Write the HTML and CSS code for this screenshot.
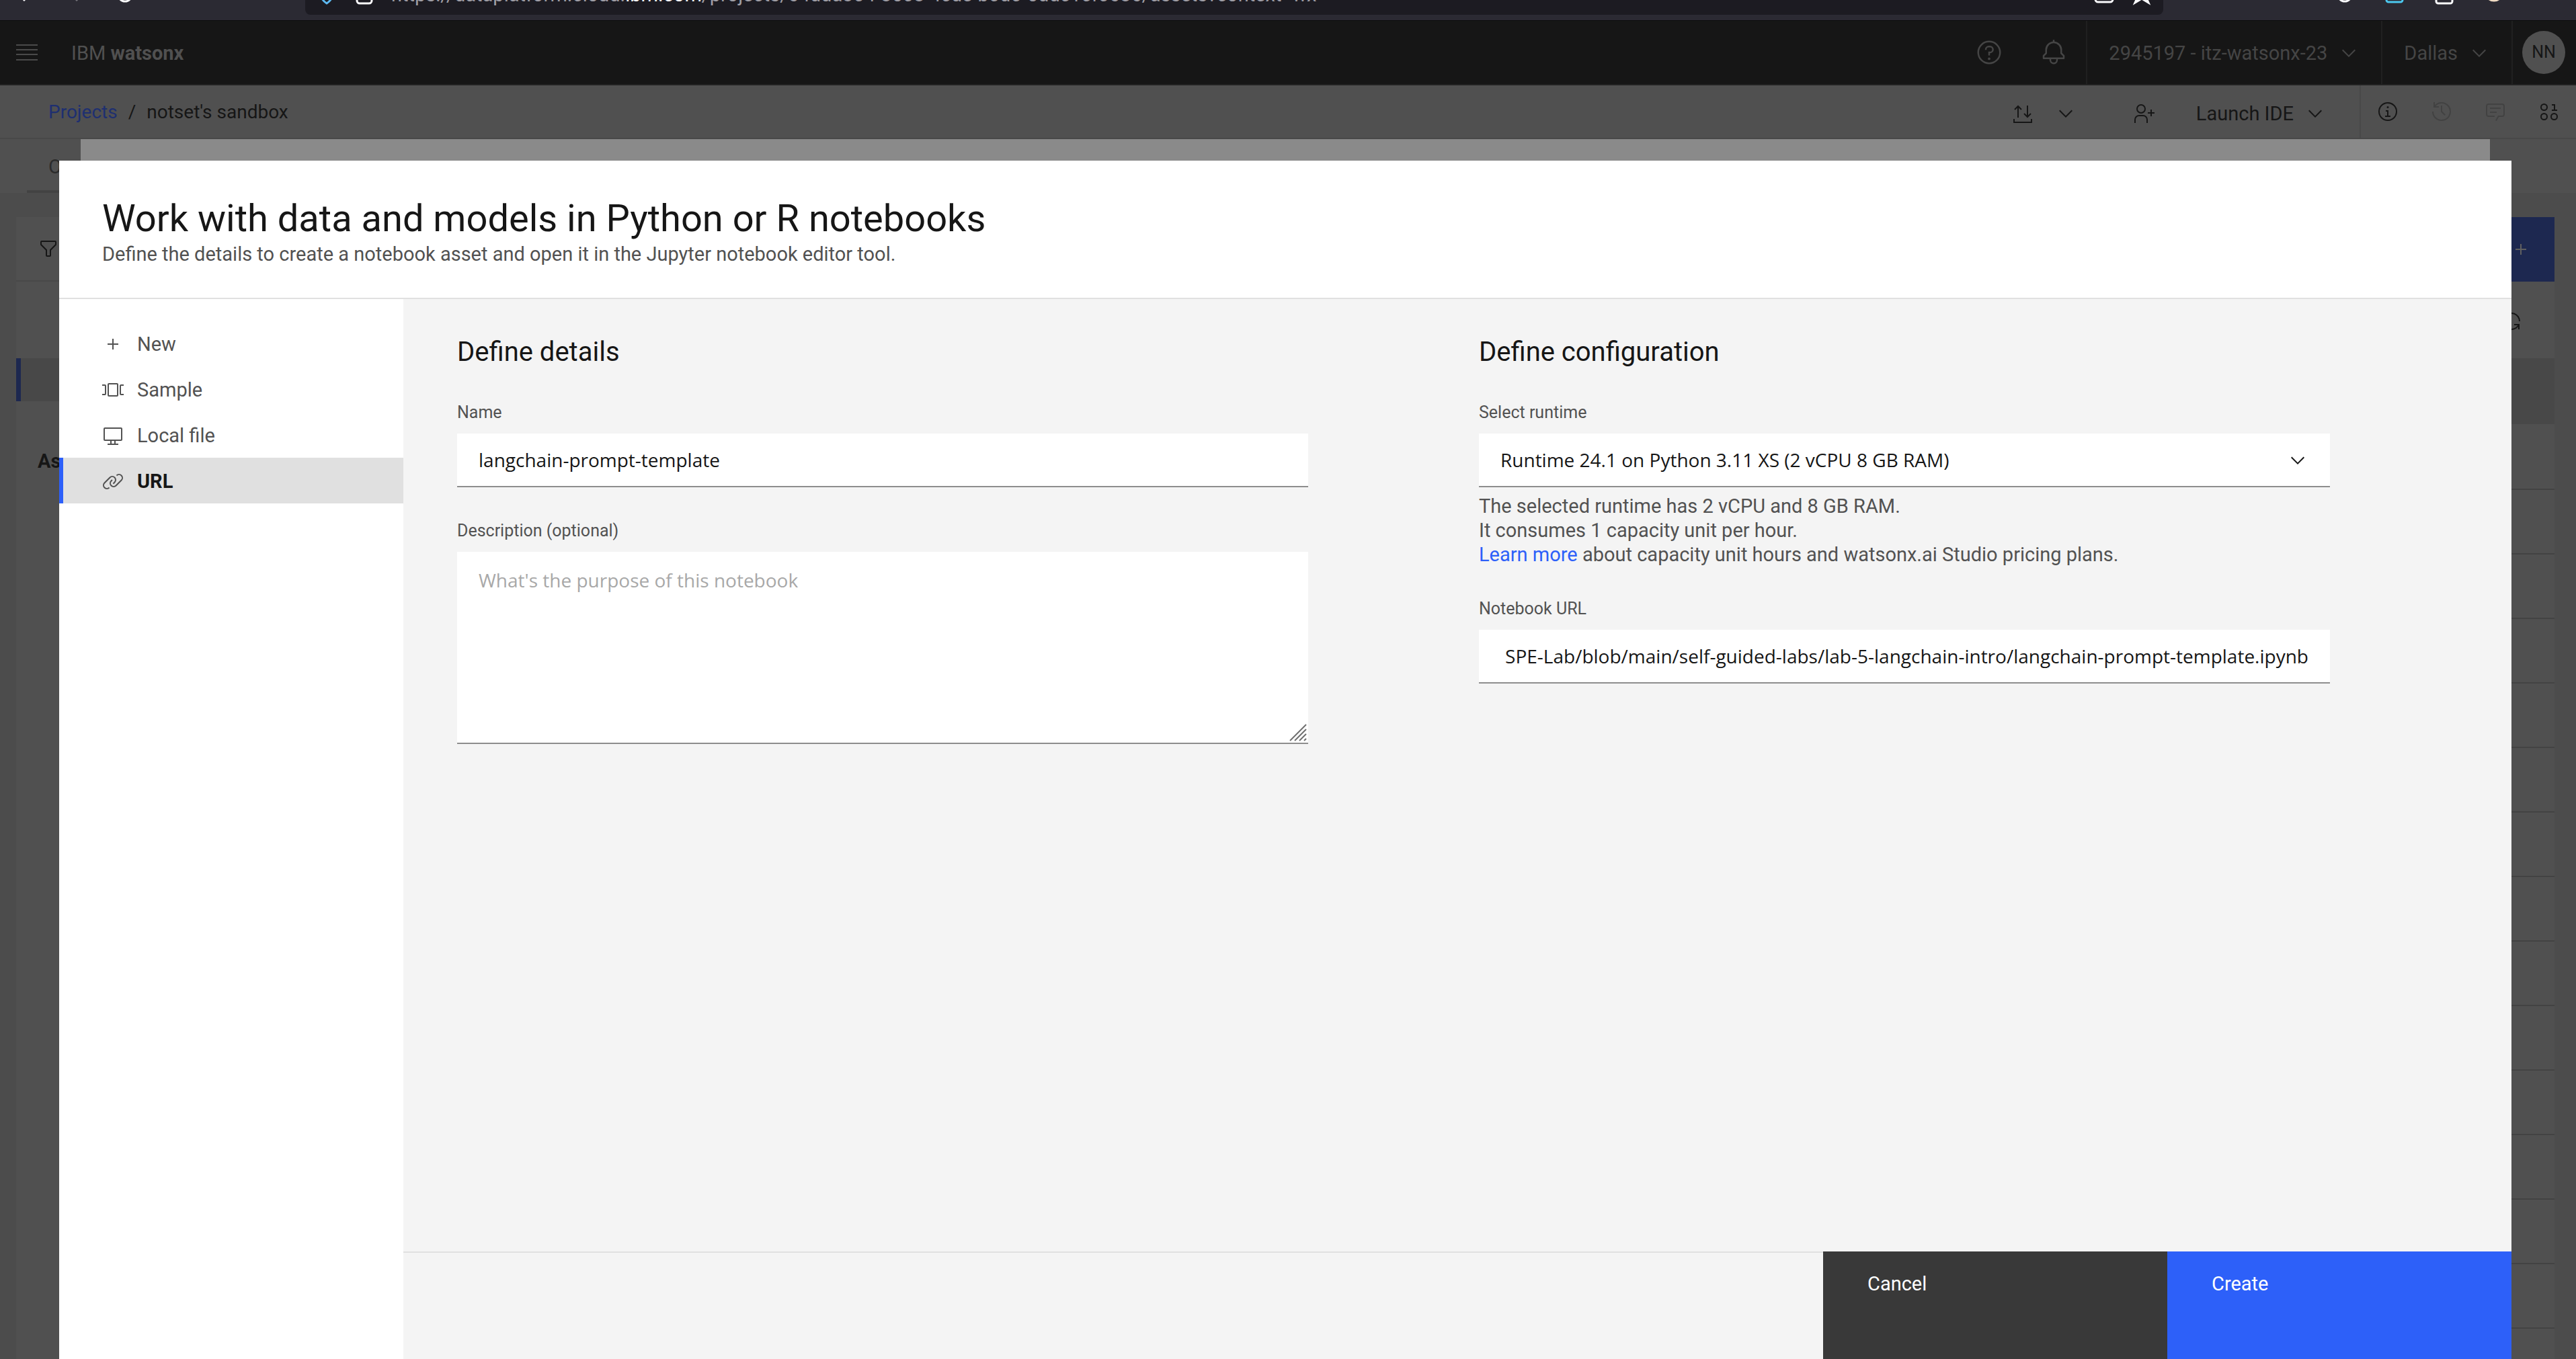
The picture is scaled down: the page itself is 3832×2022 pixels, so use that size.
FILE: index.html
```html
<!DOCTYPE html>
<html lang="en">
<head>
<meta charset="utf-8">
<meta name="viewport" content="width=device-width, initial-scale=1">
<title>New notebook - IBM watsonx</title>
<link rel="stylesheet" href="styles.css">
</head>
<body>
<svg class="defs" aria-hidden="true">
  <symbol id="chevron" viewBox="0 0 32 32"><path d="M16 22 6 12 7.4 10.6 16 19.2 24.6 10.6 26 12z"/></symbol>
  <symbol id="add" viewBox="0 0 32 32"><path d="M17 15V8h-2v7H8v2h7v7h2v-7h7v-2z"/></symbol>
</svg>

<div class="browser">
  <div class="browser-nav">
    <svg class="bi" viewBox="0 0 32 32"><path d="M26 16H6M15 7l-9 9 9 9"/></svg>
    <svg class="bi bi-muted" viewBox="0 0 32 32"><path d="M6 16h20M17 7l9 9-9 9"/></svg>
    <svg class="bi" viewBox="0 0 32 32"><circle cx="16" cy="16" r="10"/></svg>
  </div>
  <div class="url-bar">
    <svg class="bi bi-blue" viewBox="0 0 32 32"><path d="M16 4 6 7c0 10 2 17 10 22 8-5 10-12 10-22z"/></svg>
    <svg class="bi" viewBox="0 0 32 32"><rect x="5" y="13" width="22" height="16" rx="4"/><path d="M10 13V8a6 6 0 0 1 12 0v5"/></svg>
    <span class="url">https://dataplatform.cloud.<b>ibm.com</b>/projects/64dda304-8508-4cde-b0d0-5ddc1cf0686/assets?context=wx</span>
    <svg class="bi" viewBox="0 0 32 32"><rect x="3" y="5" width="26" height="22" rx="4"/></svg>
    <svg class="bi" viewBox="0 0 32 32"><path d="m16 3 4 9 9 1-7 6 4 9-10-6-10 6 4-9-7-6 9-1z"/></svg>
  </div>
  <div class="browser-ext">
    <svg class="bi" viewBox="0 0 32 32"><circle cx="16" cy="16" r="10"/></svg>
    <svg class="bi bi-cyan" viewBox="0 0 32 32"><rect x="4" y="5" width="24" height="22" rx="3"/></svg>
    <svg class="bi" viewBox="0 0 32 32"><rect x="4" y="5" width="24" height="24" rx="3"/></svg>
    <svg class="bi bi-orange" viewBox="0 0 32 32"><circle cx="16" cy="12" r="13"/></svg>
  </div>
</div>

<div class="app">
  <header class="header">
    <button class="icon-btn menu" aria-label="Menu">
      <svg width="32" height="24" viewBox="0 0 32 24"><path d="M0 0h32v2H0zM0 7h32v2H0zM0 14h32v2H0zM0 22h32v2H0z"/></svg>
    </button>
    <span class="brand">IBM <b>watsonx</b></span>
    <button class="icon-btn header-icon" aria-label="Help">
      <svg width="40" height="40" viewBox="0 0 32 32"><path d="M16 2a14 14 0 1 0 14 14A14 14 0 0 0 16 2zm0 26a12 12 0 1 1 12-12 12 12 0 0 1-12 12z"/><circle cx="16" cy="23.5" r="1.5"/><path d="M17 8h-1.500A4.490 4.490 0 0 0 11 12.500V13h2v-.5A2.500 2.500 0 0 1 15.500 10H17a2.500 2.500 0 0 1 0 5h-2v4.500h2V17a4.500 4.500 0 0 0 0-9z"/></svg>
    </button>
    <button class="icon-btn header-icon" aria-label="Notifications">
      <svg width="40" height="40" viewBox="0 0 32 32"><path d="M28.707 19.293 26 16.586V13a10.014 10.014 0 0 0-9-9.949V1h-2v2.051A10.014 10.014 0 0 0 6 13v3.586l-2.707 2.707A1 1 0 0 0 3 20v3a1 1 0 0 0 1 1h7v.777a5.152 5.152 0 0 0 4.500 5.199A5.006 5.006 0 0 0 21 25v-1h7a1 1 0 0 0 1-1v-3a1 1 0 0 0-.293-.707zM19 25a3 3 0 0 1-6 0v-1h6zm8-3H5v-1.586l2.707-2.707A1 1 0 0 0 8 17v-4a8 8 0 0 1 16 0v4a1 1 0 0 0 .293.707L27 20.414z"/></svg>
    </button>
    <button class="header-cell">2945197 - itz-watsonx-23 <svg class="icon"><use href="#chevron"/></svg></button>
    <button class="header-cell">Dallas <svg class="icon"><use href="#chevron"/></svg></button>
    <div class="avatar-cell"><span class="avatar">NN</span></div>
  </header>

  <div class="subheader">
    <nav class="crumbs" aria-label="Breadcrumb"><a href="#">Projects</a><span>/</span><span>notset's sandbox</span></nav>
    <div class="actions">
      <button class="icon-btn share" aria-label="Import and export">
        <svg class="icon line" viewBox="0 0 32 32"><path d="M9 22V5M4 10l5-5 5 5M23 4v17M18 16l5 5 5-5M3 24v5h26v-5"/></svg>
        <svg class="icon"><use href="#chevron"/></svg>
      </button>
      <button class="icon-btn" aria-label="Add collaborator">
        <svg class="icon line" viewBox="0 0 32 32"><circle cx="12" cy="9" r="6"/><path d="M3 30v-5a6 6 0 0 1 6-6h6a6 6 0 0 1 6 6v5M22 15h10M27 10v10"/></svg>
      </button>
      <button class="icon-btn launch">Launch IDE <svg class="icon"><use href="#chevron"/></svg></button>
    </div>
    <div class="tools">
      <button class="icon-btn tool" aria-label="Information">
        <svg class="icon" viewBox="0 0 32 32"><path d="M17 22v-8h-4v2h2v6h-3v2h8v-2zM16 8a1.500 1.500 0 1 0 1.500 1.500A1.500 1.500 0 0 0 16 8z"/><path d="M16 30a14 14 0 1 1 14-14 14 14 0 0 1-14 14zm0-26a12 12 0 1 0 12 12A12 12 0 0 0 16 4z"/></svg>
      </button>
      <button class="icon-btn tool tool-off" aria-label="History" disabled>
        <svg class="icon" viewBox="0 0 32 32"><path d="M20.590 22 15 16.410V7h2v8.580l5 5.010z"/><path d="M16 2A13.940 13.940 0 0 0 6 6.230V2H4v8h8V8H7.080A12 12 0 1 1 4 16H2A14 14 0 1 0 16 2z"/></svg>
      </button>
      <button class="icon-btn tool tool-off" aria-label="Comments" disabled>
        <svg class="icon" viewBox="0 0 32 32"><path d="M17.740 30 16 29l4-7h6a2 2 0 0 0 2-2V8a2 2 0 0 0-2-2H6a2 2 0 0 0-2 2v12a2 2 0 0 0 2 2h9v2H6a4 4 0 0 1-4-4V8a4 4 0 0 1 4-4h20a4 4 0 0 1 4 4v12a4 4 0 0 1-4 4h-4.840z"/><path d="M8 10h16v2H8zM8 16h10v2H8z"/></svg>
      </button>
      <button class="icon-btn tool" aria-label="Data">
        <svg class="icon line" viewBox="0 0 32 32"><circle cx="8.500" cy="9.500" r="4.500"/><circle cx="8.500" cy="23.500" r="4.500"/><circle cx="23.500" cy="23.500" r="4.500"/><path d="M20 6h4v8M20 14h8"/></svg>
      </button>
    </div>
  </div>

  <nav class="tabs" aria-label="Project"><a class="tab" href="#">Overview</a></nav>

  <main class="card">
    <div class="toolbar">
      <svg class="icon" viewBox="0 0 32 32"><path d="M18 28h-4a2 2 0 0 1-2-2v-7.590L4.590 11A2 2 0 0 1 4 9.590V6a2 2 0 0 1 2-2h20a2 2 0 0 1 2 2v3.590a2 2 0 0 1-.59 1.410L20 18.410V26a2 2 0 0 1-2 2zM6 6v3.590l8 8V26h4v-8.410l8-8V6z"/></svg>
      <button class="new-asset" aria-label="New asset"><svg class="icon"><use href="#add"/></svg></button>
    </div>
    <div class="panes">
      <aside class="types">
        <div class="type-selected"></div>
        <b class="types-title">Asset types</b>
      </aside>
      <section class="assets">
        <div class="refresh">
          <svg class="icon" viewBox="0 0 32 32"><path d="M12 10H6.780A11 11 0 0 1 27 16h2A13 13 0 0 0 6 7.680V4H4v8h8zM20 22h5.220A11 11 0 0 1 5 16H3a13 13 0 0 0 23 8.320V28h2v-8h-8z"/></svg>
        </div>
        <div class="assets-head"></div>
        <div class="row"></div><div class="row"></div><div class="row"></div><div class="row"></div><div class="row"></div>
        <div class="row"></div><div class="row"></div><div class="row"></div><div class="row"></div><div class="row"></div>
        <div class="row"></div><div class="row"></div><div class="row"></div><div class="row"></div><div class="row"></div>
      </section>
    </div>
  </main>
</div>

<div class="dialog-under"></div>

<form class="dialog" role="dialog" aria-labelledby="dialog-title">
  <header class="dialog-head">
    <h1 id="dialog-title">Work with data and models in Python or R notebooks</h1>
    <p>Define the details to create a notebook asset and open it in the Jupyter notebook editor tool.</p>
  </header>
  <div class="dialog-body">
    <nav class="sources" aria-label="Source">
      <a class="source" href="#"><svg class="icon"><use href="#add"/></svg>New</a>
      <a class="source" href="#"><svg class="icon line" viewBox="0 0 32 32"><rect x="9" y="7" width="14" height="18" rx="1"/><path d="M0 9h4a1 1 0 0 1 1 1v12a1 1 0 0 1-1 1H0M32 9h-4a1 1 0 0 0-1 1v12a1 1 0 0 0 1 1h4"/></svg>Sample</a>
      <a class="source" href="#"><svg class="icon" viewBox="0 0 32 32"><path d="M28 4H4a2 2 0 0 0-2 2v16a2 2 0 0 0 2 2h8v4H8v2h16v-2h-4v-4h8a2 2 0 0 0 2-2V6a2 2 0 0 0-2-2zM18 28h-4v-4h4zm10-6H4V6h24z"/></svg>Local file</a>
      <a class="source source-on" href="#" aria-current="page"><svg class="icon" viewBox="0 0 32 32"><path d="M29.250 6.760a6 6 0 0 0-8.500 0l1.420 1.420a4 4 0 1 1 5.670 5.670l-8 8a4 4 0 1 1-5.670-5.660l1.410-1.420-1.410-1.420-1.420 1.420a6 6 0 0 0 0 8.500A6 6 0 0 0 17 25a6 6 0 0 0 4.270-1.760l8-8a6 6 0 0 0-.02-8.480z"/><path d="M4.190 24.820a4 4 0 0 1 0-5.670l8-8a4 4 0 0 1 5.670 0A3.940 3.940 0 0 1 19 14a4 4 0 0 1-1.170 2.850L15.710 19l1.420 1.420 2.120-2.120a6 6 0 0 0-8.510-8.510l-8 8a6 6 0 0 0 0 8.510A6 6 0 0 0 7 28a6.070 6.070 0 0 0 4.280-1.760L9.860 24.820a4 4 0 0 1-5.670 0z"/></svg>URL</a>
    </nav>
    <div class="content">
      <div class="columns">
        <section class="column">
          <h2>Define details</h2>
          <div class="field">
            <label for="name">Name</label>
            <input class="control" id="name" type="text" value="langchain-prompt-template">
          </div>
          <div class="field">
            <label for="description">Description (optional)</label>
            <div class="control-wrap">
              <textarea class="control area" id="description" placeholder="What's the purpose of this notebook"></textarea>
              <svg class="grip" viewBox="0 0 26 26"><path d="M1 25 25 1M8 25 25 8M15 25l10-10M22 25l3-3"/></svg>
            </div>
          </div>
        </section>
        <section class="column">
          <h2>Define configuration</h2>
          <div class="field">
            <label for="runtime">Select runtime</label>
            <div class="control-wrap">
              <select class="control" id="runtime"><option>Runtime 24.1 on Python 3.11 XS (2 vCPU 8 GB RAM)</option></select>
              <svg class="icon caret"><use href="#chevron"/></svg>
            </div>
            <p class="help">The selected runtime has 2 vCPU and 8 GB RAM.<br>It consumes 1 capacity unit per hour.<br><a href="#">Learn more</a> about capacity unit hours and watsonx.ai Studio pricing plans.</p>
          </div>
          <div class="field">
            <label for="url">Notebook URL</label>
            <input class="control control-end" id="url" type="text" value="SPE-Lab/blob/main/self-guided-labs/lab-5-langchain-intro/langchain-prompt-template.ipynb">
          </div>
        </section>
      </div>
      <footer class="dialog-foot">
        <button class="btn btn-secondary" type="button">Cancel</button>
        <button class="btn btn-primary" type="submit">Create</button>
      </footer>
    </div>
  </div>
</form>
</body>
</html>
```
FILE: styles.css
```css
*, *::before, *::after { box-sizing: border-box; }

body {
  margin: 0;
  position: relative;
  height: 100vh;
  display: flex;
  flex-direction: column;
  overflow: hidden;
  background: #4c4c4c;
  color: #161616;
  font-family: Roboto, "Liberation Sans", sans-serif;
  font-size: 29px;
  line-height: 36px;
}

h1, h2, p { margin: 0; font-weight: 400; }
a { color: inherit; text-decoration: none; }
button, input, select, textarea { font: inherit; color: inherit; border: 0; border-radius: 0; }
button { background: none; padding: 0; }

.defs { display: none; }
.icon { width: 32px; height: 32px; flex: none; fill: currentColor; }
.line { fill: none; stroke: currentColor; stroke-width: 2px; }
.icon-btn { display: flex; align-items: center; justify-content: center; }

/* Browser toolbar, scrolled mostly out of view */
.browser {
  flex: none;
  height: 31px;
  padding-bottom: 8px;
  display: flex;
  align-items: flex-end;
  overflow: hidden;
  background: #2b2a33;
  border-bottom: 1px solid #0c0c0d;
  color: #fbfbfe;
}
.browser-nav, .url-bar, .browser-ext { display: flex; align-items: center; height: 60px; flex: none; }
.browser-nav { width: 454px; padding-left: 22px; gap: 42px; }
.url-bar { flex: 1; padding: 0 16px; gap: 24px; background: #1c1b22; border-radius: 8px; }
.browser-ext { width: 614px; padding-left: 254px; gap: 42px; }
.bi { width: 32px; height: 32px; flex: none; fill: none; stroke: currentColor; stroke-width: 3px; }
.bi-muted { color: #77767d; }
.bi-blue { color: #5db9f0; }
.bi-cyan { color: #4cc9f0; }
.bi-orange { fill: #d9822b; stroke: #f1dcc4; }
.url { flex: 1; color: #9f9ea6; white-space: nowrap; }
.url b { font-weight: 400; color: #fbfbfe; }

/* Product page, dimmed behind the dialogs */
.app { flex: 1; min-height: 0; overflow: hidden; display: flex; flex-direction: column; }
.header {
  flex: none;
  height: 96px;
  display: flex;
  align-items: stretch;
  background: #161616;
  border-bottom: 2px solid #222;
  color: #454545;
}
.header svg { fill: currentColor; }
.menu { width: 80px; color: #4a4a4a; }
.brand { padding: 2px 0 0 26px; margin-right: auto; align-self: center; color: #505050; }
.header-icon { width: 96px; }
.header-cell { display: flex; align-items: center; gap: 16px; padding: 2px 32px 0; border-left: 2px solid #202020; }
.avatar-cell { display: flex; align-items: center; padding: 0 16px 0 14px; border-left: 2px solid #202020; }
.avatar {
  width: 64px;
  height: 64px;
  display: flex;
  align-items: center;
  justify-content: center;
  border-radius: 50%;
  background: #505050;
  color: #161616;
  font-size: 25px;
}

.subheader { flex: none; height: 80px; display: flex; background: #505050; border-bottom: 2px solid #484848; }
.crumbs { display: flex; align-items: center; gap: 16px; padding: 2px 0 0 72px; margin-right: auto; font-size: 28px; }
.crumbs a { color: #1e2f70; }
.actions { display: flex; align-items: center; padding: 6px 50px 0 0; gap: 62px; }
.share { gap: 32px; margin-right: 22px; }
.launch { gap: 16px; }
.tools { display: flex; border-left: 2px solid #484848; }
.tool { width: 80px; }
.tool-off { color: #424242; }

.tabs { flex: none; height: 80px; display: flex; padding-left: 40px; background: #505050; }
.tab { display: flex; align-items: center; padding: 6px 32px 0; border-bottom: 4px solid #434343; color: #2b2b2b; }

.card { flex: 1; min-height: 0; margin: 36px 32px 0 24px; background: #505050; }
.toolbar {
  height: 96px;
  display: flex;
  align-items: center;
  justify-content: space-between;
  padding-left: 32px;
  border-bottom: 2px solid #484848;
}
.new-asset { display: flex; align-items: center; justify-content: flex-end; align-self: flex-start; width: 256px; height: 96px; padding-right: 34px; background: #1d2850; color: #606060; }
.panes { display: flex; }
.types { width: 480px; padding-top: 114px; }
.type-selected { height: 64px; border-left: 7px solid #1d2850; background: #484848; }
.types-title { display: block; padding: 71px 0 0 32px; }
.assets { flex: 1; }
.refresh { height: 114px; display: flex; align-items: center; justify-content: flex-end; padding: 4px 48px 0; }
.assets-head { height: 98px; margin-bottom: 2px; background: #484848; }
.row { height: 96px; border-bottom: 2px solid #434343; }

/* Dialogs */
.dialog-under { position: absolute; inset: 207px 128px 0 120px; background: #8a8a8a; }
.dialog {
  position: absolute;
  inset: 239px 96px 0 88px;
  display: flex;
  flex-direction: column;
  background: #fff;
}
.dialog-head { padding: 54px 64px 44px; border-bottom: 2px solid #e0e0e0; color: #525252; }
.dialog-head h1 { font-size: 56px; line-height: 64px; color: #161616; }
.dialog-head p { line-height: 42px; }
.dialog-body { flex: 1; display: flex; }

.sources { width: 512px; flex: none; padding-top: 32px; }
.source {
  height: 68px;
  display: flex;
  align-items: center;
  gap: 20px;
  padding: 2px 0 0 58px;
  border-left: 6px solid transparent;
  color: #525252;
}
.source-on { background: #e0e0e0; border-left-color: #2d60f9; color: #161616; font-weight: 700; }
.source-on .icon { color: #525252; }

.content { flex: 1; display: flex; flex-direction: column; background: #f4f4f4; }
.columns { flex: 1; display: grid; grid-template-columns: 1fr 1fr; column-gap: 254px; padding: 54px 270px 0 80px; }
.column h2 { margin-bottom: 50px; font-size: 40px; line-height: 50px; }
.field { margin-bottom: 50px; }
.field label { display: block; margin-bottom: 16px; font-size: 25px; line-height: 30px; color: #525252; }
.control {
  display: block;
  width: 100%;
  height: 80px;
  padding: 0 32px;
  background: #fff;
  border-bottom: 2px solid #8d8d8d;
  outline: 0;
  appearance: none;
  font-family: "Open Sans", "Noto Sans", sans-serif;
  font-size: 28px;
}
.control-wrap { position: relative; }
.control-end { direction: rtl; }
.area { height: 286px; padding: 24px 32px; line-height: 36px; resize: none; }
.area::placeholder { color: #a8a8a8; }
.grip { position: absolute; right: 2px; bottom: 4px; width: 26px; height: 26px; fill: none; stroke: #6f6f6f; stroke-width: 2px; }
.caret { position: absolute; right: 32px; top: 24px; pointer-events: none; }
.help { margin: 10px 0 -2px; color: #525252; }
.help a { color: #2d60f9; }

.dialog-foot { height: 160px; display: flex; justify-content: flex-end; border-top: 2px solid #e0e0e0; }
.btn { width: 512px; height: 160px; margin-top: -2px; padding: 30px 66px; display: flex; align-items: flex-start; color: #fff; }
.btn-secondary { background: #393939; }
.btn-primary { background: #2d60f9; }
```
